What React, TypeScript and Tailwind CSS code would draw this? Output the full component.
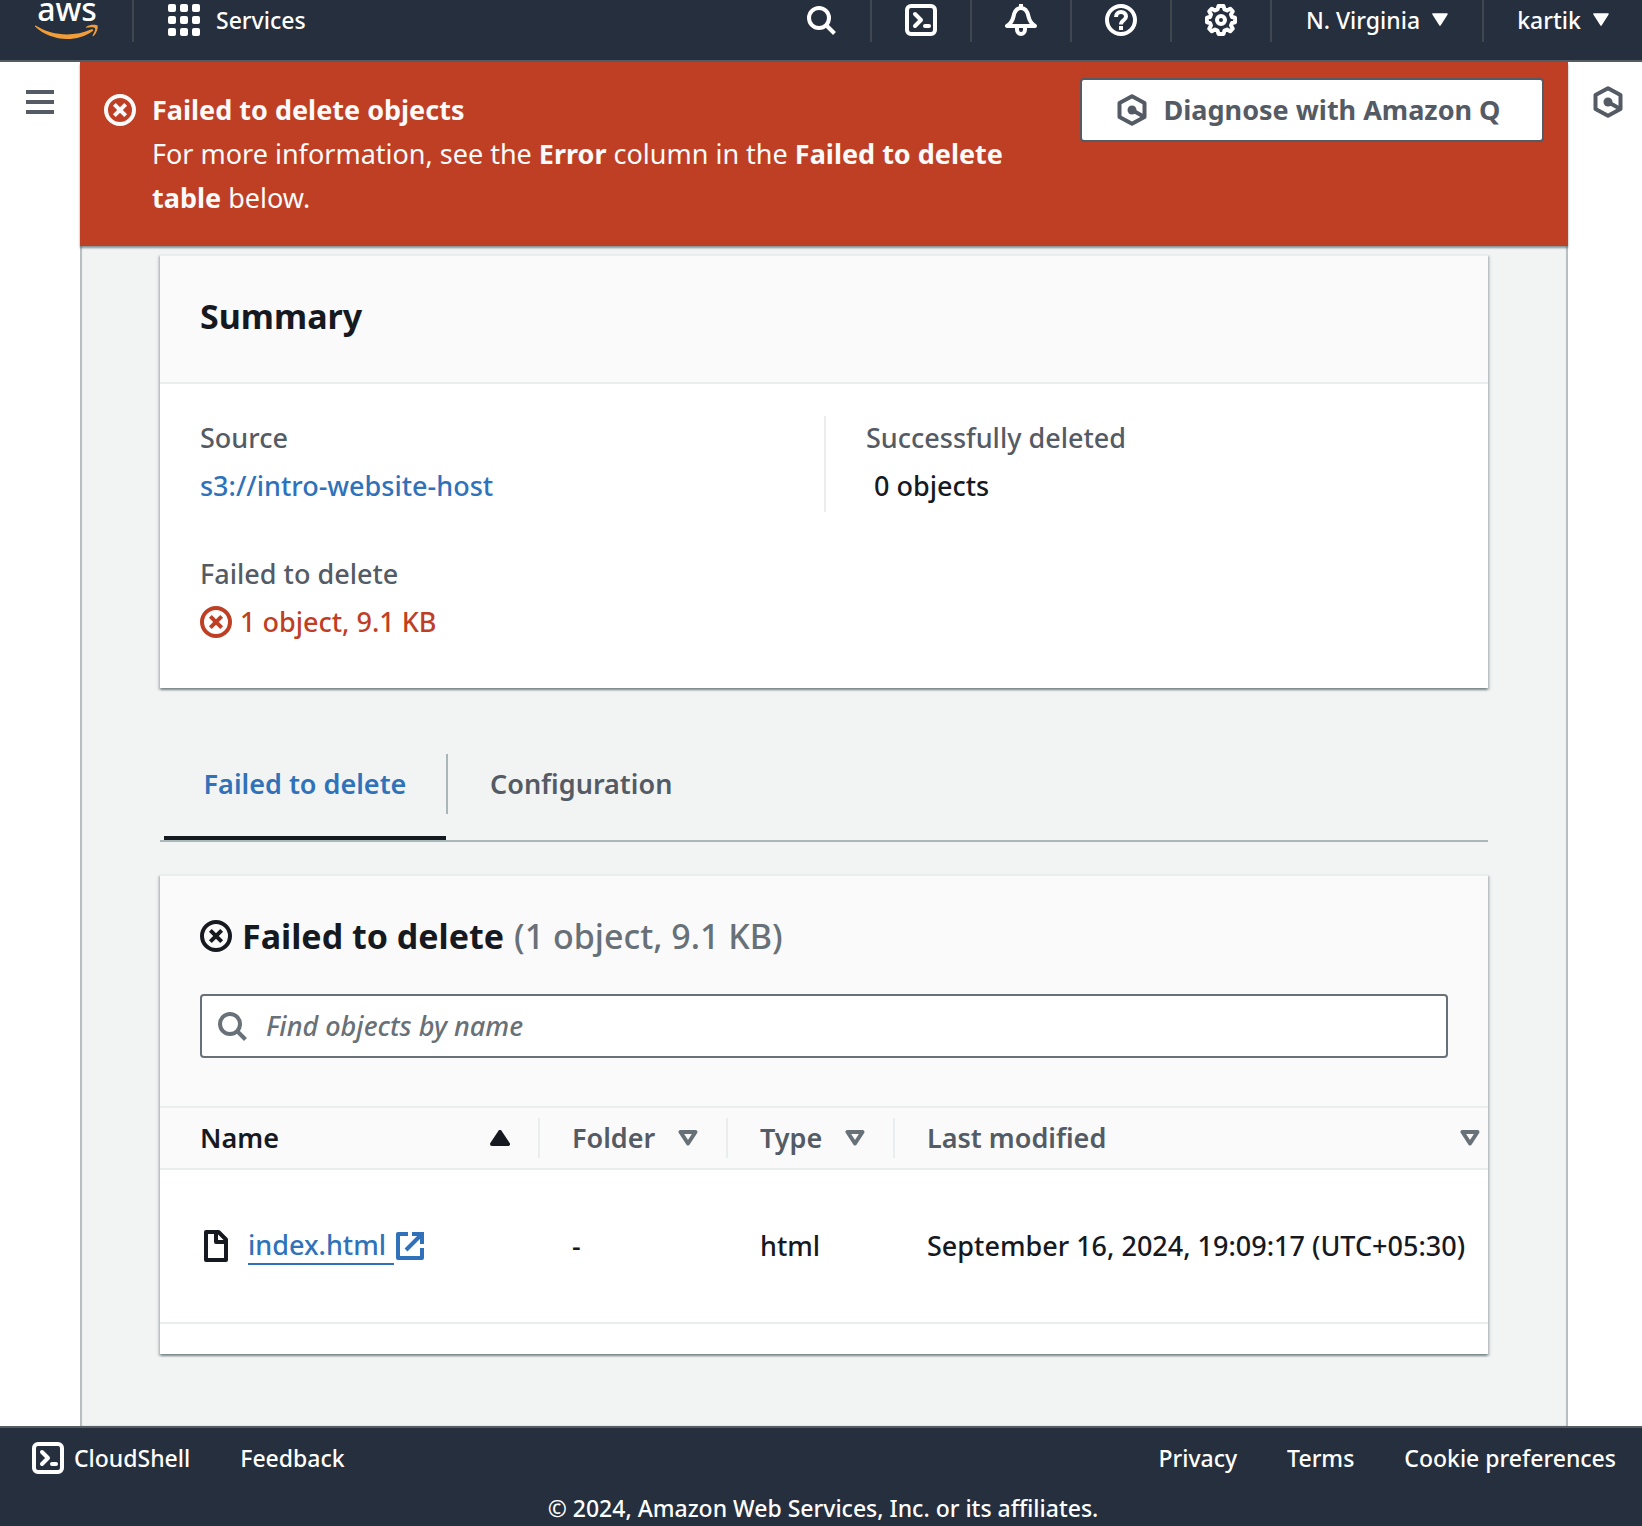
import React from "react";

type IconProps = { className?: string };

const CircleX = ({ className }: IconProps) => (
  <svg viewBox="0 0 16 16" fill="none" stroke="currentColor" strokeWidth="2" className={className} aria-hidden="true">
    <circle cx="8" cy="8" r="7" />
    <path d="m10.830 5.170-5.660 5.660M10.830 10.830 5.170 5.170" />
  </svg>
);

const Search = ({ className }: IconProps) => (
  <svg viewBox="0 0 32 32" fill="none" stroke="currentColor" strokeWidth="4" className={className} aria-hidden="true">
    <circle cx="14" cy="14" r="10" />
    <path d="m21 21 8.500 8.500" />
  </svg>
);

const Shell = ({ className }: IconProps) => (
  <svg viewBox="0 0 32 32" fill="none" stroke="currentColor" strokeWidth="4" className={className} aria-hidden="true">
    <rect x="2" y="2" width="28" height="28" rx="4" />
    <path d="m10 10 6 6-6 6" strokeLinecap="round" strokeLinejoin="round" />
    <path d="M20 22h4" strokeLinecap="round" />
  </svg>
);

const Bell = ({ className }: IconProps) => (
  <svg viewBox="0 0 32 32" fill="none" stroke="currentColor" strokeWidth="4" strokeLinejoin="round" className={className} aria-hidden="true">
    <path d="M2 22h28c-4-2.500-5.500-5-6.500-9.500C22.500 7.500 20.500 4 16 4s-6.500 3.500-7.500 8.500C7.500 17 6 19.500 2 22Z" />
    <path d="M16 0v4" />
    <path d="M12 23v2.500a4 4.500 0 0 0 8 0V23" />
  </svg>
);

const Help = ({ className }: IconProps) => (
  <svg viewBox="0 0 32 32" fill="none" stroke="currentColor" strokeWidth="4" className={className} aria-hidden="true">
    <circle cx="16" cy="16" r="14" />
    <path d="M11 13c0-3 2-5 5-5s5 2 5 4.500c0 4-5 3.500-5 8M16 22v4" />
  </svg>
);

const Gear = ({ className }: IconProps) => (
  <svg viewBox="0 0 32 32" fill="none" stroke="currentColor" strokeWidth="4" strokeLinejoin="round" className={className} aria-hidden="true">
    <path d="M13.500 2h5l1 3.500 2.500 1 3.200-1.800 2.600 2.600L26 10.500l1 2.500 3 .8v4.400l-3 .8-1 2.500 1.800 3.200-2.600 2.600L22 25.500l-2.500 1-1 3.500h-5l-1-3.500-2.500-1-3.200 1.800-2.600-2.600L6 21.500 5 19l-3-.8v-4.400L5 13l1-2.500-1.800-3.200 2.600-2.600L10 6.500l2.500-1Z" />
    <circle cx="16" cy="16" r="4" />
  </svg>
);

const Hexagon = ({ className }: IconProps) => (
  <svg viewBox="0 0 32 32" fill="none" stroke="currentColor" strokeWidth="4" className={className} aria-hidden="true">
    <path d="M16 2.300 28.500 9v14L16 29.700 3.500 23V9Z" strokeLinejoin="round" />
    <path d="m16 16 11.500 6.500" />
    <circle cx="16" cy="16" r="4.500" fill="currentColor" stroke="none" />
  </svg>
);

const FileIcon = ({ className }: IconProps) => (
  <svg viewBox="0 0 24 32" fill="none" stroke="currentColor" strokeWidth="4" strokeLinejoin="round" className={className} aria-hidden="true">
    <path d="M2 2h12.500L22 9.500V30H2Z" />
    <path d="M12 2v10h10" />
  </svg>
);

const External = ({ className }: IconProps) => (
  <svg viewBox="0 0 28 28" fill="none" stroke="currentColor" strokeWidth="4" className={className} aria-hidden="true">
    <path d="M12 2H2v24h24V16" strokeLinejoin="round" />
    <path d="M16 2h10v10M26 2 10 18" />
  </svg>
);

const Caret = ({ className }: IconProps) => (
  <svg viewBox="0 0 16 14" className={className} aria-hidden="true">
    <path d="M1 1h14L8 12Z" fill="currentColor" stroke="currentColor" strokeWidth="1.500" strokeLinejoin="round" />
  </svg>
);

const SortUp = () => (
  <svg viewBox="0 0 20 16" className="h-4 w-5 shrink-0" aria-hidden="true">
    <path d="M10 2 18 14H2Z" fill="currentColor" stroke="currentColor" strokeWidth="4" strokeLinejoin="round" />
  </svg>
);

const SortDown = () => (
  <svg viewBox="0 0 20 16" className="h-4 w-5 shrink-0 text-[#687078]" aria-hidden="true">
    <path d="M2.500 2h15L10 13.500Z" fill="none" stroke="currentColor" strokeWidth="4" strokeLinejoin="round" />
  </svg>
);

const Bar = () => <span className="h-[42px] w-[2px] shrink-0 bg-[#414750]" />;

const cardShadow =
  "shadow-[0_2px_2px_0_rgba(0,28,36,0.3),2px_2px_2px_0_rgba(0,28,36,0.15),-2px_2px_2px_0_rgba(0,28,36,0.15)]";

function TopBar() {
  return (
    <header className="flex h-[62px] items-start border-b-2 border-[#545b64] bg-[#252f3e] text-[23px] font-medium text-white">
      <a href="#home" className="flex w-[132px] shrink-0 flex-col items-center pl-[2px]" aria-label="AWS home">
        <span className="h-[23px] text-[32px] leading-[18px] font-medium">aws</span>
        <svg viewBox="0 0 64 16" className="h-4 w-16 text-[#f19e38]" fill="currentColor" aria-hidden="true">
          <path d="M.6 2.600C10 8.500 21 11.500 32 11.500c8.500 0 16.500-1.800 24.600-5.200 1.200-.5 2.300.8 1.100 1.700C50.500 13.500 41 16 32 16 20 16 8.500 11.500.3 3.800c-.7-.7-.4-1.500.3-1.200Z" />
          <path d="M60 5.200c-1.100-1.500-6-.8-8.500-.5-.7.100-.8-.5-.2-1C55.500.8 61.800 1.700 62.500 2.600c.8 1-.2 7.400-4 10.500-.6.500-1.200.2-.9-.4.900-2.200 3.200-6 2.400-7.500Z" />
        </svg>
      </a>
      <Bar />
      <button className="ml-[34px] flex h-10 items-center gap-4">
        <span className="grid grid-cols-3 gap-1">
          {Array.from({ length: 9 }, (_, i) => (
            <span key={i} className="size-2 rounded-[2px] bg-white" />
          ))}
        </span>
        Services
      </button>
      <div className="ml-auto flex items-start">
        <button aria-label="Search" className="flex h-10 w-[98px] items-center justify-center"><Search className="size-8" /></button>
        <Bar />
        <button aria-label="CloudShell" className="flex h-10 w-[98px] items-center justify-center"><Shell className="size-8" /></button>
        <Bar />
        <button aria-label="Notifications" className="flex h-10 w-[98px] items-center justify-center"><Bell className="size-8" /></button>
        <Bar />
        <button aria-label="Help" className="flex h-10 w-[98px] items-center justify-center"><Help className="size-8" /></button>
        <Bar />
        <button aria-label="Settings" className="flex h-10 w-[98px] items-center justify-center"><Gear className="size-8" /></button>
        <Bar />
        <button className="flex h-10 w-[210px] items-center justify-center gap-3">N. Virginia <Caret className="h-[14px] w-4" /></button>
        <Bar />
        <button className="flex h-10 w-[158px] items-center justify-center gap-3">kartik <Caret className="h-[14px] w-4" /></button>
      </div>
    </header>
  );
}

function ErrorBanner() {
  return (
    <div role="alert" className="flex min-h-[184px] items-start bg-[#bf3f25] px-6 pt-4 font-normal text-[#fafafa] shadow-[0_2px_2px_0_rgba(0,28,36,0.45)]">
      <CircleX className="mt-4 size-8 shrink-0" />
      <div className="mt-[10px] ml-4 flex-1 pr-14 leading-[44px]">
        <h2 className="font-bold">Failed to delete objects</h2>
        <p>
          For more information, see the <b>Error</b> column in the <b>Failed to delete table</b> below.
        </p>
      </div>
      <button className="flex h-16 w-[464px] shrink-0 items-center justify-center gap-4 rounded-[4px] border-2 border-[#545b64] bg-white pr-2 font-bold text-[#545b64]">
        <Hexagon className="size-8" />
        Diagnose with Amazon Q
      </button>
    </div>
  );
}

function Summary() {
  return (
    <section className={`bg-white ${cardShadow}`}>
      <div className="flex h-[130px] items-center border-y-2 border-[#eaeded] bg-[#fafafa] px-10 pb-[6px]">
        <h2 className="text-[34px] font-bold">Summary</h2>
      </div>
      <dl className="grid grid-cols-[624px_1fr] gap-y-10 px-10 pt-8 pb-11 leading-[44px]">
        <div className="h-24">
          <dt className="text-[#545b64]">Source</dt>
          <dd className="mt-1"><a href="#bucket" className="text-[#3072b9]">s3://intro-website-host</a></dd>
        </div>
        <div className="h-24 border-l-2 border-[#eaeded] pl-10">
          <dt className="text-[#545b64]">Successfully deleted</dt>
          <dd className="mt-1 pl-2">0 objects</dd>
        </div>
        <div>
          <dt className="text-[#545b64]">Failed to delete</dt>
          <dd className="mt-1 flex items-center gap-2 text-[#bf3f25]"><CircleX className="size-8" />1 object, 9.1 KB</dd>
        </div>
      </dl>
    </section>
  );
}

function Tabs() {
  return (
    <div role="tablist" className="mt-[60px] flex border-b-2 border-[#aab7b8] font-semibold">
      <button role="tab" aria-selected="true" className="ml-1 flex h-[92px] w-[282px] justify-center border-b-4 border-[#16191f] pt-[14px] text-[#3072b9]">Failed to delete</button>
      <span className="mt-[6px] h-[60px] w-[2px] bg-[#aab7b8]" />
      <button role="tab" aria-selected="false" className="flex h-[92px] px-[42px] pt-[14px] text-[#545b64]">Configuration</button>
    </div>
  );
}

function HeaderCell({ label, last }: { label: string; last?: boolean }) {
  return (
    <th scope="col" aria-sort={label === "Name" ? "ascending" : "none"} className="p-0 py-[10px] text-left font-semibold">
      <button
        className={
          label === "Name"
            ? "flex h-10 w-full items-center justify-between border-r-2 border-[#eaeded] pr-7 pl-10"
            : last
              ? "flex h-10 w-full items-center justify-between pr-2 pl-8 text-[#545b64]"
              : "flex h-10 w-full items-center justify-between border-r-2 border-[#eaeded] pr-7 pl-8 text-[#545b64]"
        }
      >
        {label}
        {label === "Name" ? <SortUp /> : <SortDown />}
      </button>
    </th>
  );
}

function FailedTable() {
  return (
    <section className={`mt-8 overflow-clip bg-white pb-[30px] ${cardShadow}`}>
      <div className="border-y-2 border-[#eaeded] bg-[#fafafa] px-10 pt-[38px] pb-12">
        <h2 className="flex h-11 items-center text-[34px] font-bold">
          <CircleX className="mr-[10px] size-8" />
          Failed to delete
          <span className="ml-[10px] font-medium text-[#687078]">(1 object, 9.1 KB)</span>
        </h2>
        <label className="mt-9 flex h-16 items-center rounded-[4px] border-2 border-[#687078] bg-white px-[14px] text-[#687078]">
          <Search className="size-8 shrink-0" />
          <input aria-label="Find objects by name" placeholder="Find objects by name" className="ml-[18px] w-full bg-transparent outline-none placeholder:text-[#687078] placeholder:italic" />
        </label>
      </div>
      <table className="w-full table-fixed border-collapse">
        <colgroup>
          <col className="w-[380px]" />
          <col className="w-[188px]" />
          <col className="w-[167px]" />
          <col />
        </colgroup>
        <thead className="border-b-2 border-[#eaeded] bg-[#fafafa]">
          <tr>
            <HeaderCell label="Name" />
            <HeaderCell label="Folder" />
            <HeaderCell label="Type" />
            <HeaderCell label="Last modified" last />
          </tr>
        </thead>
        <tbody>
          <tr className="h-[154px] border-b-2 border-[#eaeded]">
            <td className="p-0 pl-11">
              <div className="flex items-center">
                <FileIcon className="h-8 w-6" />
                <a href="#object" className="ml-5 flex items-center text-[#3072b9]">
                  <span className="border-b-2 border-[#3072b9] pr-2 leading-9">index.html</span>
                  <External className="ml-[2px] size-7" />
                </a>
              </div>
            </td>
            <td className="p-0 pl-8">-</td>
            <td className="p-0 pl-8">html</td>
            <td className="p-0 pl-8 whitespace-nowrap">September 16, 2024, 19:09:17 (UTC+05:30)</td>
          </tr>
        </tbody>
      </table>
    </section>
  );
}

function Footer() {
  return (
    <footer className="border-t-2 border-[#545b64] bg-[#252f3e] text-[23px] font-medium text-white">
      <div className="flex h-[60px] items-center pr-[26px] pl-8">
        <button className="flex items-center gap-[10px]"><Shell className="size-8" />CloudShell</button>
        <a href="#feedback" className="ml-[50px]">Feedback</a>
        <nav className="ml-auto flex gap-[50px]">
          <a href="#privacy">Privacy</a>
          <a href="#terms">Terms</a>
          <a href="#cookies">Cookie preferences</a>
        </nav>
      </div>
      <p className="h-[38px] pt-[2px] pl-1 text-center leading-9">© 2024, Amazon Web Services, Inc. or its affiliates.</p>
    </footer>
  );
}

export default function App() {
  return (
    <div className="flex min-h-screen flex-col bg-white font-['Noto_Sans',sans-serif] text-[27px] leading-[44px] font-medium text-[#16191f]">
      <TopBar />
      <div className="flex flex-1">
        <aside className="flex w-20 shrink-0 justify-center pt-7">
          <button aria-label="Open navigation" className="flex h-6 w-7 flex-col gap-[6px]">
            <span className="h-1 w-full bg-[#545b64]" />
            <span className="h-1 w-full bg-[#545b64]" />
            <span className="h-1 w-full bg-[#545b64]" />
          </button>
        </aside>
        <main className="min-w-0 flex-1 bg-[#f2f3f3] shadow-[inset_2px_0_1px_0_rgba(0,28,36,0.25),inset_-2px_0_1px_0_rgba(0,28,36,0.25)]">
          <ErrorBanner />
          <div className="px-20 pt-2 pb-16">
            <Summary />
            <Tabs />
            <FailedTable />
          </div>
        </main>
        <aside className="flex w-[74px] shrink-0 justify-center pt-6 pl-[6px]">
          <button aria-label="Amazon Q" className="size-8 text-[#545b64]"><Hexagon className="size-8" /></button>
        </aside>
      </div>
      <Footer />
    </div>
  );
}
